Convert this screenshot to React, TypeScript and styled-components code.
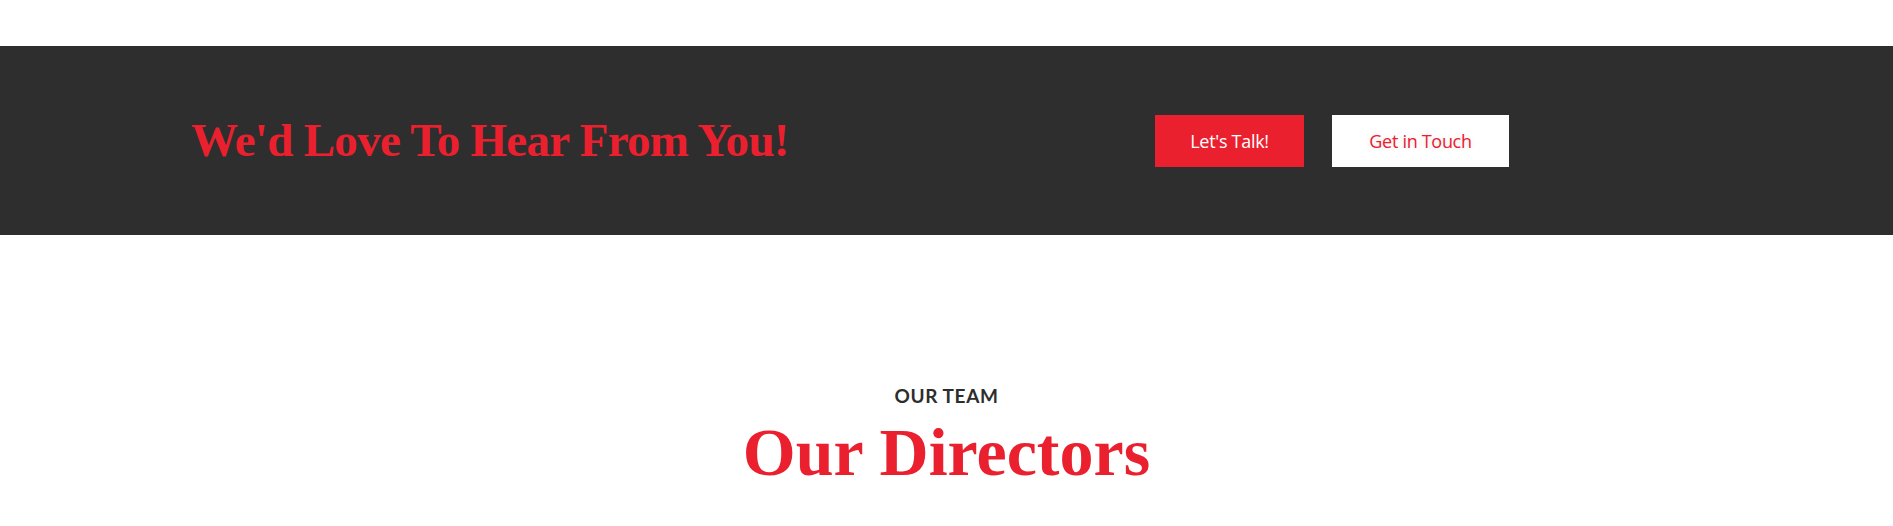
import React from "react";
import styled, { createGlobalStyle } from "styled-components";

const Global = createGlobalStyle`
  html, body { margin: 0; padding: 0; background: #ffffff; }
  body { font-family: "Liberation Sans", Arial, sans-serif; }
`;

const Page = styled.div`
  padding-top: 46px;
`;

const Band = styled.section`
  background: #2e2e2e;
  height: 189px;
  display: flex;
  align-items: center;
`;

const BandInner = styled.div`
  width: 100%;
  padding-left: 191px;
  box-sizing: border-box;
  display: grid;
  grid-template-columns: 964px auto;
  align-items: center;
`;

const BandTitle = styled.h2`
  margin: 0;
  font-family: "Liberation Serif", "Times New Roman", serif;
  font-weight: 700;
  font-size: 47px;
  line-height: 1;
  letter-spacing: -0.7px;
  color: #ea202f;
`;

const Buttons = styled.div`
  display: flex;
  gap: 28px;
`;

const Button = styled.a<{ $variant: "solid" | "light" }>`
  display: inline-flex;
  align-items: center;
  justify-content: center;
  height: 52px;
  box-sizing: border-box;
  font-family: "Open Sans", "Noto Sans", sans-serif;
  font-size: 18px;
  letter-spacing: -0.3px;
  text-decoration: none;
  cursor: pointer;
  width: ${(p) => (p.$variant === "solid" ? "149px" : "177px")};
  background: ${(p) => (p.$variant === "solid" ? "#ea202f" : "#ffffff")};
  color: ${(p) => (p.$variant === "solid" ? "#ffffff" : "#ea202f")};
  text-shadow: ${(p) =>
    p.$variant === "light" ? "0 0 6px rgba(0,0,0,0.12)" : "none"};
`;

const Team = styled.section`
  padding-top: 151px;
  display: flex;
  flex-direction: column;
  align-items: center;
`;

const Eyebrow = styled.div`
  font-family: "Lato", "Noto Sans", sans-serif;
  font-weight: 700;
  font-size: 19px;
  letter-spacing: 0.6px;
  color: #2d2d2d;
  line-height: 1;
`;

const Title = styled.h2`
  margin: 13px 0 0;
  font-family: "Liberation Serif", "Times New Roman", serif;
  font-weight: 700;
  font-size: 68px;
  line-height: 1;
  color: #ea202f;
`;

export default function App() {
  return (
    <>
      <Global />
      <Page>
        <Band>
          <BandInner>
            <BandTitle>We'd Love To Hear From You!</BandTitle>
            <Buttons>
              <Button $variant="solid">Let's Talk!</Button>
              <Button $variant="light">Get in Touch</Button>
            </Buttons>
          </BandInner>
        </Band>
        <Team>
          <Eyebrow>OUR TEAM</Eyebrow>
          <Title>Our Directors</Title>
        </Team>
      </Page>
    </>
  );
}
